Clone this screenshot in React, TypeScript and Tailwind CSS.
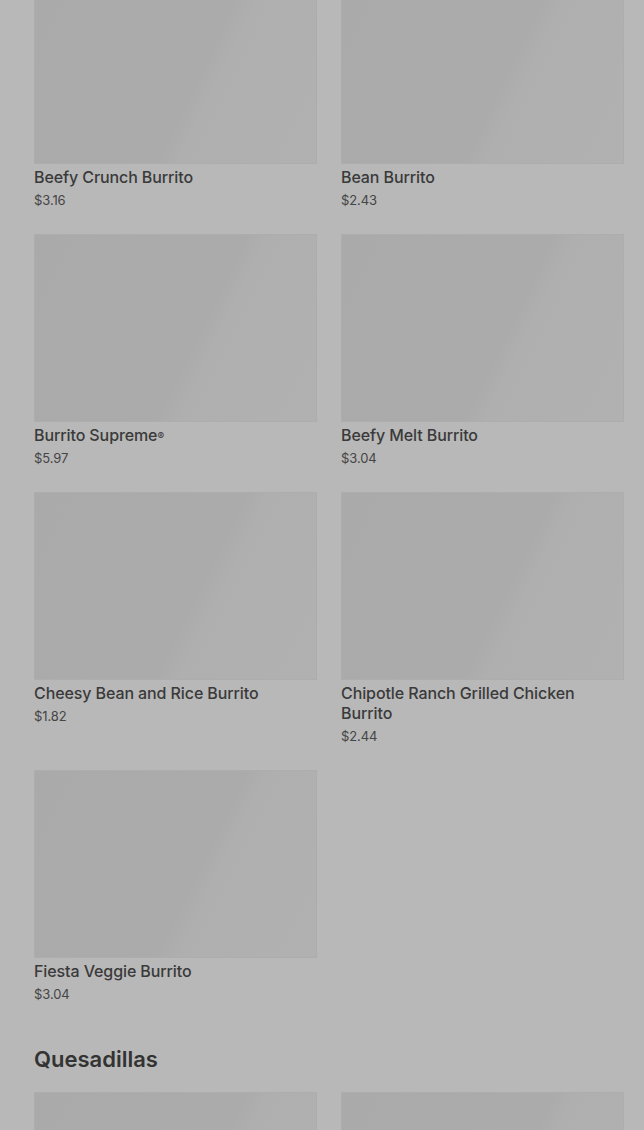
import React from "react";

type Item = { name: string; price: string };

const burritos: Item[] = [
  { name: "Beefy Crunch Burrito", price: "$3.16" },
  { name: "Bean Burrito", price: "$2.43" },
  { name: "Burrito Supreme®", price: "$5.97" },
  { name: "Beefy Melt Burrito", price: "$3.04" },
  { name: "Cheesy Bean and Rice Burrito", price: "$1.82" },
  { name: "Chipotle Ranch Grilled Chicken Burrito", price: "$2.44" },
  { name: "Fiesta Veggie Burrito", price: "$3.04" },
];

function Placeholder() {
  return (
    <div className="h-[188px] w-full bg-[linear-gradient(116deg,#aaaaaa_0%,#ababab_57%,#afafaf_63%,#b1b1b1_100%)] border border-[#adadad]" />
  );
}

function Card({ item }: { item: Item }) {
  return (
    <div className="flex flex-col">
      <Placeholder />
      <div className="mt-[3px] text-[16px] leading-[20px] font-medium text-[#3a3a3a] tracking-[-0.1px]">
        {item.name.endsWith("®") ? (
          <>
            {item.name.slice(0, -1)}
            <sup className="text-[10px] relative -top-[1px]">®</sup>
          </>
        ) : (
          item.name
        )}
      </div>
      <div className="mt-[4px] text-[13px] leading-[18px] text-[#454545] tracking-[-0.1px]">{item.price}</div>
    </div>
  );
}

export default function App() {
  return (
    <div
      className="min-h-screen w-full bg-[#b8b8b8] overflow-hidden"
      style={{ fontFamily: "Inter, 'Noto Sans', sans-serif" }}
    >
      <div className="pl-[34px] pr-[20px] -mt-[24px]">
        <div className="grid grid-cols-2 gap-x-[24px] gap-y-[25px]">
          {burritos.map((b) => (
            <Card key={b.name} item={b} />
          ))}
        </div>
        <h2 className="mt-[42px] mb-[19px] text-[22px] leading-[28px] font-semibold text-[#333333]">
          Quesadillas
        </h2>
        <div className="grid grid-cols-2 gap-x-[24px] gap-y-[25px]">
          <Placeholder />
          <Placeholder />
        </div>
      </div>
    </div>
  );
}
